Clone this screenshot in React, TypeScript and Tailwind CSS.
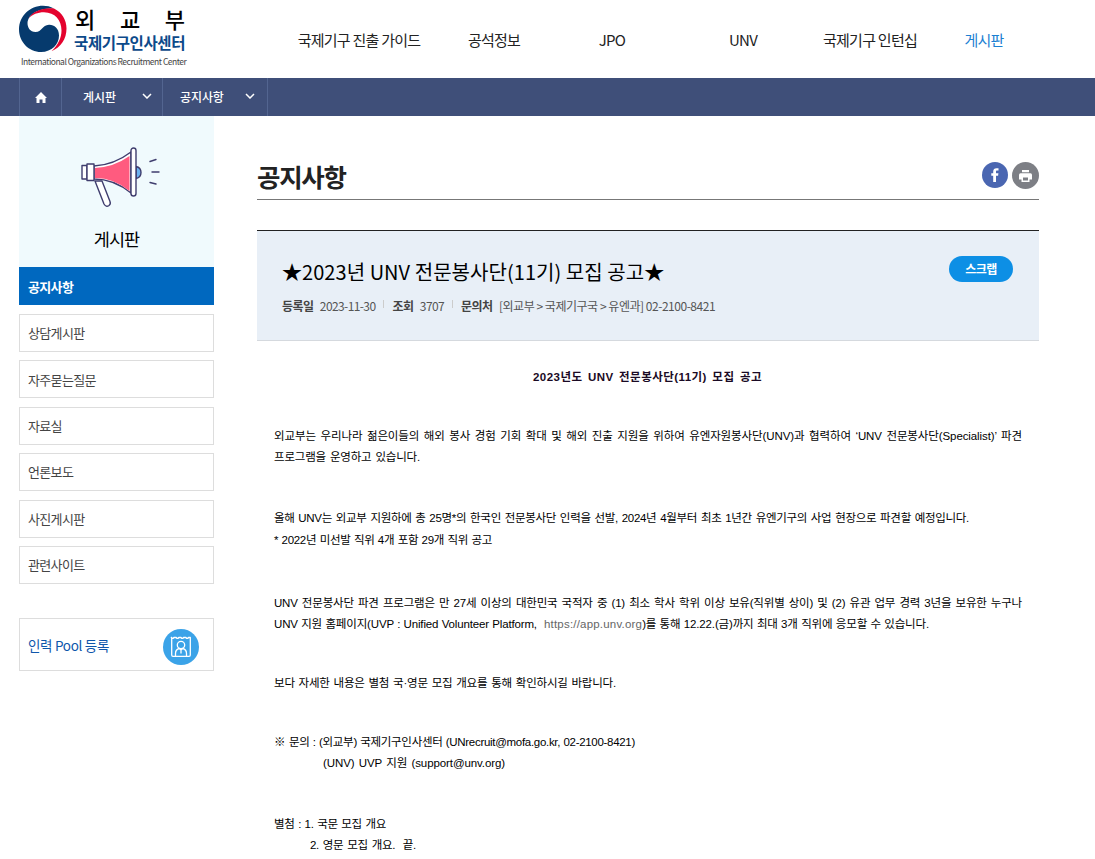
import type { ReactNode } from 'react'
import { clsx } from 'clsx'

// ─── Data ────────────────────────────────────────────────────────────────────

const sideLinks = ['상담게시판', '자주묻는질문', '자료실', '언론보도', '사진게시판', '관련사이트']

// ─── Icons ───────────────────────────────────────────────────────────────────

function Emblem() {
  return (
    <svg viewBox="0 0 48 48" className="h-12 w-12">
      <path d="M24 .8C11 .8 0 11 0 24.500C0 37 10 47 22 47C33 47 40 39 40 30.500C40 23 35 19.500 30 19.700C23 20 23 27 16.500 27C11 27 8.500 22.500 8.500 18C9 9 20 3 35 3.500C31 1.500 28 .8 24 .8Z" fill="#063a6d" />
      <path d="M9.500 13.500C14 6 24 2.300 35 3.500C43 7.500 47.500 15 47.500 23.500C47.500 34 42 42 32.500 46.300C39 40 42.500 33 42.500 25.500C42.500 15 36 7.500 25 7.300C18.500 7.300 13.500 9.500 9.500 13.500Z" fill="#e4032e" />
    </svg>
  )
}

function Chevron() {
  return (
    <svg viewBox="0 0 10 6" className="mb-0.5 h-1.5 w-2.5" fill="none" stroke="#fff" strokeWidth="1.5">
      <path d="M1 1l4 4 4-4" />
    </svg>
  )
}

function Megaphone() {
  return (
    <svg viewBox="0 0 80 62" className="h-[62px] w-20" stroke="#3f3d6e" strokeWidth="1.4" strokeLinejoin="round" strokeLinecap="round">
      <path d="M55 19.500q5 1 5 6t-5 6z" fill="#6cb2f0" />
      <path d="M14 34l9 23q2 3.500 5 1.500 2-1.500 1-4l-8-20.500z" fill="#fff" />
      <path d="M13 19Q33 18 50 5v41Q33 32 13 32z" fill="#fff" />
      <path d="M14 21Q33 20 48.500 9v35Q33 31 14 31z" fill="#ff5b7f" stroke="none" />
      <rect x="50" y="1" width="5" height="48" rx="2.500" fill="#fff" />
      <rect x="1" y="18.500" width="5" height="13.500" fill="#fff" />
      <rect x="6" y="17" width="7" height="16.500" fill="#fff" />
      <path d="M69 14.500l6-2M71 25h7M69 35.500l6 1.500" fill="none" />
    </svg>
  )
}

function BadgeIcon() {
  return (
    <svg viewBox="0 0 36 36" className="h-9 w-9" fill="none" stroke="#fff" strokeWidth="1.300" strokeLinejoin="round">
      <circle cx="18" cy="18" r="18" fill="#3ba3e8" stroke="none" />
      <path d="M8.700 8.500V26q0 1.300 1.300 1.300h16q1.300 0 1.300-1.300V8.500h-1.800q-1.300 1.800-2.600 0h-2.300q-1.300 1.800-2.600 0h-2.200q-1.300 1.800-2.600 0h-2.300q-1.300 1.800-2.600 0z" />
      <circle cx="18" cy="16" r="3.700" />
      <path d="M12.500 27v-2.500q0-4 3.800-5L18 21l1.700-1.500q3.800 1 3.800 5V27M18 21v3.500" />
    </svg>
  )
}

// ─── Pieces ──────────────────────────────────────────────────────────────────

function NavItem({ className, children }: { className: string; children: ReactNode }) {
  return <a href="#" className={clsx('shrink-0 whitespace-nowrap text-center', className)}>{children}</a>
}

function Meta({ label, className, children }: { label: string; className?: string; children: ReactNode }) {
  return (
    <span className="flex gap-[6.5px]">
      <b className="font-bold text-[#444]">{label}</b>
      <span className={clsx('text-[#555]', className)}>{children}</span>
    </span>
  )
}

// One typeset line of the notice, spread over its own measure
function Line({ className, children }: { className: string; children: ReactNode }) {
  return <p className={clsx('h-[21px] leading-[21px] [text-align-last:justify]', className)}>{children}</p>
}

export default function App() {
  return (
    <div className="h-[859px] w-[1095px] overflow-hidden bg-white font-['Noto_Sans_CJK_KR',sans-serif] text-[#222]">
      {/* Header */}
      <header className="flex h-[78px] pl-[19px]">
        <a href="#" className="w-[200px] pt-[5px]">
          <div className="flex gap-2">
            <Emblem />
            <div className="w-[112px]">
              <div className="flex h-[27px] w-[110px] justify-between text-[22px] font-medium leading-[26px] text-black">
                <span>외</span><span>교</span><span>부</span>
              </div>
              <div className="-ml-px whitespace-nowrap text-[15.5px] font-bold leading-[21px] tracking-[-0.38px] text-[#0c4a8a]">국제기구인사센터</div>
            </div>
          </div>
          <div className="ml-[2px] whitespace-nowrap text-[8.5px] leading-[17px] tracking-[-0.49px] text-[#444]">International Organizations Recruitment Center</div>
        </a>
        <nav className="flex pt-[29px] text-[15px] leading-[22px] tracking-[-0.75px]">
          <NavItem className="ml-[74px] w-[132px]">국제기구 진출 가이드</NavItem>
          <NavItem className="ml-[3px] w-[132px]">공석정보</NavItem>
          <NavItem className="-ml-px w-[106px]">JPO</NavItem>
          <NavItem className="ml-[13px] w-[130px]">UNV</NavItem>
          <NavItem className="w-[124px]">국제기구 인턴십</NavItem>
          <NavItem className="ml-[14px] w-[76px] text-[#1c80d2]">게시판</NavItem>
        </nav>
      </header>

      {/* Breadcrumb */}
      <div className="flex h-[38px] bg-[#3f4f79] pl-[19px] text-[12px] font-medium tracking-[-0.1px] text-white">
        <a href="#" className="flex w-[43px] items-center justify-center border-x border-[#536590]">
          <svg viewBox="0 0 12 11" className="h-[11px] w-3" fill="#fff"><path d="M6 0L0 6h1.500v5h3V7.500h3V11h3V6H12z" /></svg>
        </a>
        <div className="flex w-[101px] items-center justify-between border-r border-[#536590] pl-[21px] pr-[10px]">게시판<Chevron /></div>
        <div className="flex w-[105px] items-center justify-between border-r border-[#536590] pl-[17px] pr-[12px]">공지사항<Chevron /></div>
      </div>

      <div className="flex pl-[19px]">
        {/* Sidebar */}
        <aside className="w-[195px] shrink-0 text-[13px] tracking-[-0.65px]">
          <div className="flex h-[151px] flex-col items-center bg-[#f0fafd] pt-[31px]">
            <div className="ml-[9px]"><Megaphone /></div>
            <h2 className="mt-[17px] text-[17.5px] leading-[26px] tracking-[-0.9px] text-black">게시판</h2>
          </div>
          <a href="#" className="flex h-[38px] items-center bg-[#0068bf] pl-[9px] pt-px font-bold text-white">공지사항</a>
          <div className="mt-[9px] flex flex-col gap-[8.4px]">
            {sideLinks.map((label) => (
              <a key={label} href="#" className="flex h-[38px] items-center border border-[#ddd] pl-2 text-[#444]">{label}</a>
            ))}
          </div>
          <a href="#" className="mt-[34px] flex h-[53px] items-center justify-between border border-[#ddd] pl-2 pr-[14px] pt-[5px] text-[13.5px] tracking-[-0.3px] text-[#0f57ab]">
            <span className="mb-[3px]">인력 Pool 등록</span>
            <BadgeIcon />
          </a>
        </aside>

        {/* Article */}
        <main className="ml-[43px] w-[782px]">
          <div className="flex h-[84px] items-center justify-between border-b border-[#777] pt-[36px]">
            <h1 className="text-[25.5px] font-bold leading-9 tracking-[-1.3px] text-[#222]">공지사항</h1>
            <div className="flex gap-1">
              <a href="#" className="flex h-[26px] w-[26px] items-center justify-center rounded-full bg-[#4a66b1]">
                <svg viewBox="0 0 8 14" className="h-3.5 w-2" fill="#fff"><path d="M2.200 14V7.800H.3V5.300h1.900V3.600C2.200 1.300 3.400.2 5.500.2h2v2.400H6.200c-1 0-1.200.4-1.200 1.200v1.500h2.400l-.3 2.500H5V14z" /></svg>
              </a>
              <a href="#" className="flex h-[27px] w-[27px] items-center justify-center rounded-full bg-[#7d7f85]">
                <svg viewBox="0 0 13 12" className="h-3 w-[13px]" fill="#fff"><path d="M3 0h7v2.300H3zM1.500 3.200h10Q13 3.200 13 5v4.500h-2.500V12h-8V9.500H0V5q0-1.800 1.500-1.800zM4 7.500v3h5v-3z" fillRule="evenodd" /></svg>
              </a>
            </div>
          </div>

          <div className="mt-[30px] flex h-[111px] justify-between border-b border-t border-b-[#d5d9de] border-t-[#222] bg-[#e8eff7] pl-[25px] pr-[26px] pt-[25px]">
            <div>
              <h3 className="whitespace-nowrap text-[20px] leading-[32px] tracking-[0.05px] text-black">★2023년 UNV 전문봉사단(11기) 모집 공고★</h3>
              <div className="mt-[9px] flex items-center text-[12px] leading-[18px] tracking-[-0.6px]">
                <Meta label="등록일">2023-11-30</Meta>
                <i className="mx-2 mb-1 h-2 w-px bg-[#ccc]" />
                <Meta label="조회">3707</Meta>
                <i className="mx-2 mb-1 h-2 w-px bg-[#ccc]" />
                <Meta label="문의처" className="tracking-[-0.47px]">[외교부 &gt; 국제기구국 &gt; 유엔과] 02-2100-8421</Meta>
              </div>
            </div>
            <button className="h-[26px] w-16 rounded-full bg-[#0d8fe5] text-[12px] font-bold tracking-[-0.6px] text-white">스크랩</button>
          </div>

          <article className="pl-[17px] pt-[26px] font-['Liberation_Sans','Noto_Sans_CJK_KR',sans-serif] text-[11.5px] tracking-[-0.2px] text-black">
            <Line className="ml-[259px] w-[229px] font-bold tracking-[0.45px] text-[#1a0a24]">2023년도 UNV 전문봉사단(11기) 모집 공고</Line>
            <Line className="mt-[38px] w-[748px] tracking-[-0.1px]">외교부는 우리나라 젊은이들의 해외 봉사 경험 기회 확대 및 해외 진출 지원을 위하여 유엔자원봉사단(UNV)과 협력하여 ‘UNV 전문봉사단(Specialist)’ 파견</Line>
            <Line className="w-[146px]">프로그램을 운영하고 있습니다.</Line>
            <Line className="mt-[40px] w-[695px] tracking-[-0.3px]">올해 UNV는 외교부 지원하에 총 25명*의 한국인 전문봉사단 인력을 선발, 2024년 4월부터 최초 1년간 유엔기구의 사업 현장으로 파견할 예정입니다.</Line>
            <Line className="mt-px w-[218px] tracking-[-0.3px]">* 2022년 미선발 직위 4개 포함 29개 직위 공고</Line>
            <Line className="mt-[42px] w-[748px]">UNV 전문봉사단 파견 프로그램은 만 27세 이상의 대한민국 국적자 중 (1) 최소 학사 학위 이상 보유(직위별 상이) 및 (2) 유관 업무 경력 3년을 보유한 누구나</Line>
            <Line className="w-[655px] tracking-[-0.15px]">UNV 지원 홈페이지(UVP : Unified Volunteer Platform,&nbsp;<a href="#" className="tracking-[0.2px] text-[#666]"> https://app.unv.org</a>)를 통해 12.22.(금)까지 최대 3개 직위에 응모할 수 있습니다.</Line>
            <Line className="mt-[38px] w-[342px]">보다 자세한 내용은 별첨 국·영문 모집 개요를 통해 확인하시길 바랍니다.</Line>
            <Line className="mt-[38px] w-[361px] tracking-[-0.3px]">※ 문의 : (외교부) 국제기구인사센터 (UNrecruit@mofa.go.kr, 02-2100-8421)</Line>
            <Line className="ml-[49px] w-[182px] tracking-[-0.1px]">(UNV) UVP 지원 (support@unv.org)</Line>
            <Line className="mt-[40px] w-[112px] tracking-[-0.3px]">별첨 : 1. 국문 모집 개요</Line>
            <Line className="ml-[36px] w-[106px] tracking-[-0.3px]">2. 영문 모집 개요.&nbsp; 끝.</Line>
          </article>
        </main>
      </div>
    </div>
  )
}
